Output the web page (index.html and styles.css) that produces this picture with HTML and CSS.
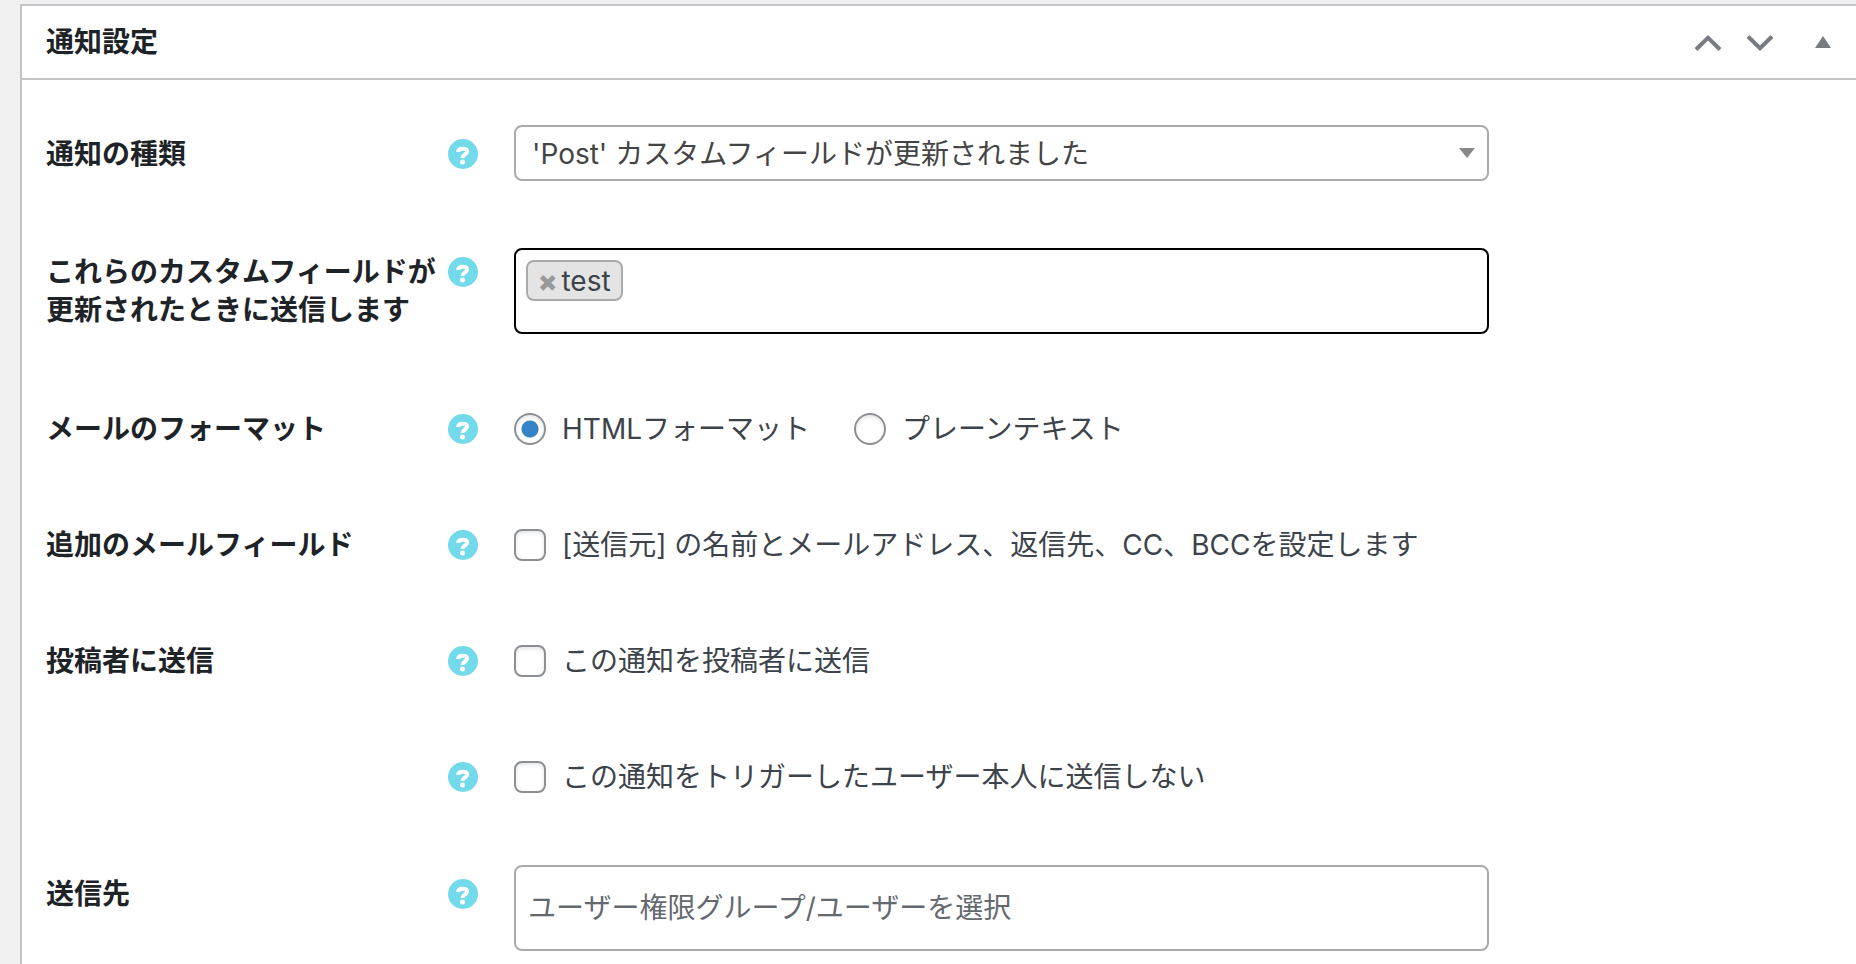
FILE: index.html
```
<!DOCTYPE html>
<html lang="ja">
<head>
    <meta charset="UTF-8">
    <meta name="viewport" content="width=device-width, initial-scale=1.0">
    <title>通知設定</title>
    <link rel="stylesheet" href="styles.css">
</head>
<body>
    <!-- shared icon -->
    <svg class="sprite" aria-hidden="true">
        <symbol id="icon-help" viewBox="0 0 30 30">
            <circle cx="15" cy="15" r="15" fill="#73daeb"/>
            <path d="M10.200 13C10.200 10.600 12 9.700 14.800 9.700c2.700 0 4.300 1 4.300 2.900 0 2.700-4.600 3-4.600 6.400" fill="none" stroke="#fff" stroke-width="4"/>
            <circle cx="14.500" cy="23" r="2.500" fill="#fff"/>
        </symbol>
    </svg>

    <section class="panel">
        <header class="panel-header">
            <h2>通知設定</h2>
            <div class="panel-actions">
                <button type="button" aria-label="上に移動">
                    <svg width="28" height="18" viewBox="0 0 28 18"><path d="M2 16.500L14 4.800l12 11.700" fill="none" stroke="#787c82" stroke-width="4"/></svg>
                </button>
                <button type="button" aria-label="下に移動">
                    <svg width="28" height="18" viewBox="0 0 28 18"><path d="M2 3.500l12 11.700L26 3.500" fill="none" stroke="#787c82" stroke-width="4"/></svg>
                </button>
                <button type="button" class="toggle" aria-label="パネルを閉じる">
                    <svg width="16" height="12" viewBox="0 0 16 12"><path d="M8 0l8 12H0z" fill="#787c82"/></svg>
                </button>
            </div>
        </header>

        <form class="panel-body">
            <div class="field field-box">
                <label class="field-label" for="trigger">通知の種類</label>
                <button type="button" class="help" aria-label="ヘルプ"><svg><use href="#icon-help"/></svg></button>
                <select id="trigger" class="control">
                    <option>'Post' カスタムフィールドが更新されました</option>
                </select>
            </div>

            <div class="field field-box field-tags">
                <label class="field-label" for="customFields">これらのカスタムフィールドが更新されたときに送信します</label>
                <button type="button" class="help" aria-label="ヘルプ"><svg><use href="#icon-help"/></svg></button>
                <div class="control tag-box">
                    <span class="tag"><button type="button" aria-label="testを削除">×</button>test</span>
                    <input type="text" id="customFields">
                </div>
            </div>

            <div class="field" role="radiogroup" aria-labelledby="formatLabel">
                <span class="field-label" id="formatLabel">メールのフォーマット</span>
                <button type="button" class="help" aria-label="ヘルプ"><svg><use href="#icon-help"/></svg></button>
                <div class="options">
                    <label><input type="radio" name="format" checked>HTMLフォーマット</label>
                    <label><input type="radio" name="format">プレーンテキスト</label>
                </div>
            </div>

            <div class="field">
                <span class="field-label">追加のメールフィールド</span>
                <button type="button" class="help" aria-label="ヘルプ"><svg><use href="#icon-help"/></svg></button>
                <div class="options">
                    <label><input type="checkbox">[送信元] の名前とメールアドレス、返信先、CC、BCCを設定します</label>
                </div>
            </div>

            <div class="field">
                <span class="field-label">投稿者に送信</span>
                <button type="button" class="help" aria-label="ヘルプ"><svg><use href="#icon-help"/></svg></button>
                <div class="options">
                    <label><input type="checkbox">この通知を投稿者に送信</label>
                </div>
            </div>

            <div class="field">
                <span class="field-label"></span>
                <button type="button" class="help" aria-label="ヘルプ"><svg><use href="#icon-help"/></svg></button>
                <div class="options">
                    <label><input type="checkbox">この通知をトリガーしたユーザー本人に送信しない</label>
                </div>
            </div>

            <div class="field field-box">
                <label class="field-label" for="recipients">送信先</label>
                <button type="button" class="help" aria-label="ヘルプ"><svg><use href="#icon-help"/></svg></button>
                <input type="text" id="recipients" class="control recipients" placeholder="ユーザー権限グループ/ユーザーを選択">
            </div>
        </form>
    </section>
</body>
</html>
```
FILE: styles.css
```
* {
    margin: 0;
    padding: 0;
    box-sizing: border-box;
}

body {
    font-family: Inter, "Noto Sans CJK JP", sans-serif;
    font-size: 28px;
    line-height: 38px;
    color: #3c434a;
    background: #f0f0f0;
    min-height: 100vh;
    display: flex;
    flex-direction: column;
    padding: 4px 0 0 20px;
}

button,
input,
select {
    font: inherit;
    color: inherit;
}

button {
    background: none;
    border: none;
    cursor: pointer;
}

svg {
    display: block;
}

.sprite {
    display: none;
}

.panel {
    flex: 1;
    background: white;
    border: 2px solid #c3c4c7;
    border-width: 2px 0 0 2px;
}

.panel-header {
    display: flex;
    align-items: center;
    justify-content: space-between;
    height: 74px;
    padding: 0 25px 0 24px;
    border-bottom: 2px solid #c3c4c7;
}

h2 {
    font-size: 28px;
    font-weight: 600;
    color: #1d2327;
}

.panel-actions {
    display: flex;
    align-items: center;
    gap: 24px;
}

.toggle {
    margin-left: 17px;
}

.panel-body {
    padding-top: 15px;
}

.field {
    display: grid;
    grid-template-columns: 402px 30px minmax(0, 1011px);
    align-items: start;
    padding: 39px 24px;
}

.field-box {
    padding-top: 30px;
    padding-bottom: 37px;
}

.field:last-child {
    padding-bottom: 12px;
}

.field-label {
    font-weight: 600;
    color: #1d2327;
    padding-right: 10px;
}

.help {
    width: 30px;
    height: 38px;
    display: flex;
    align-items: center;
}

.help svg {
    width: 30px;
    height: 30px;
}

.field-box .field-label,
.field-box .help {
    margin-top: 10px;
}

.field-tags .field-label,
.field-tags .help {
    margin-top: 5px;
}

.control,
.options {
    margin-left: 36px;
}

.control {
    border: 2px solid #aaa;
    border-radius: 8px;
    background: white;
}

select.control {
    appearance: none;
    height: 56px;
    padding: 2px 48px 0 16px;
    color: #444;
    background: white url("data:image/svg+xml,%3Csvg xmlns='http://www.w3.org/2000/svg' width='16' height='10'%3E%3Cpath d='M0 0h16L8 10z' fill='%23888'/%3E%3C/svg%3E") no-repeat right 12px center;
}

.tag-box {
    display: flex;
    align-items: flex-start;
    gap: 10px;
    height: 86px;
    padding: 10px;
    border-color: black;
}

.tag-box input {
    flex: 1;
    min-width: 0;
    border: none;
    outline: none;
}

.tag {
    display: flex;
    align-items: center;
    gap: 4px;
    height: 41px;
    padding: 0 10px;
    background: #e4e4e4;
    border: 2px solid #aaa;
    border-radius: 8px;
}

.tag button {
    font-weight: 900;
    color: #999;
}

.options {
    display: flex;
    gap: 44px;
}

.options label {
    display: flex;
    align-items: center;
    gap: 16px;
}

.options input {
    appearance: none;
    flex: none;
    width: 32px;
    height: 32px;
    border: 2px solid #8c8f94;
    border-radius: 8px;
    background: white;
    box-shadow: inset 0 2px 4px rgba(0,0,0,0.1);
}

.options input[type="radio"] {
    border-radius: 50%;
}

.options input[type="radio"]:checked {
    background: radial-gradient(circle, #3582c4 8px, transparent 9px);
}

.recipients {
    height: 86px;
    padding: 0 12px;
}

.recipients::placeholder {
    color: #646970;
    opacity: 1;
}
```
